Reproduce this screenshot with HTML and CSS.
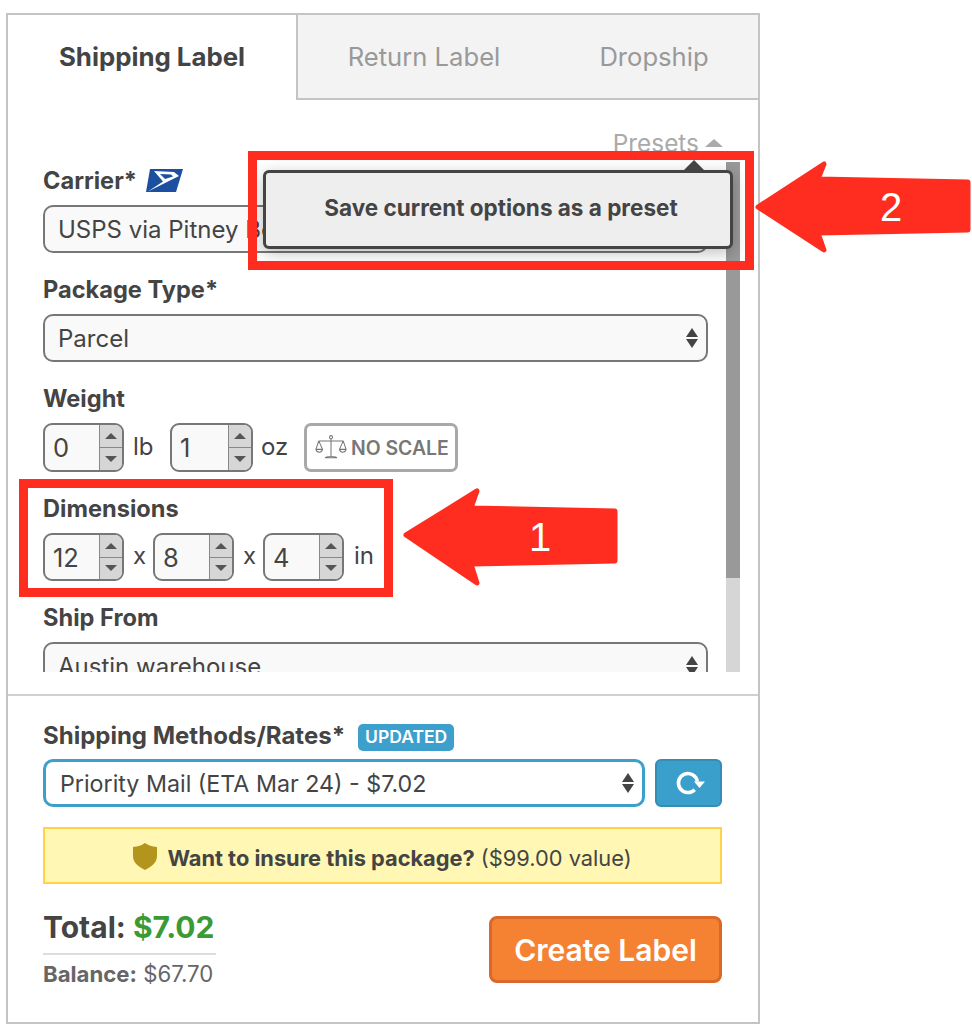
FILE: index.html
```html
<!DOCTYPE html>
<html>
<head>
  <meta charset="UTF-8">
  <title>Shipping Label</title>
  <link rel="stylesheet" href="styles.css">
</head>
<body>

<div class="panel">
  <!-- Tabs -->
  <div class="tabs">
    <div class="tab tab-active">Shipping Label</div>
    <div class="tab tab-return">Return Label</div>
    <div class="tab tab-drop">Dropship</div>
  </div>

  <!-- Scrolling form -->
  <div class="form-area">
    <div class="presets">Presets <span class="caret-up"></span></div>
    <div class="form-row">
      <div class="form-fields">
        <div class="field">
          <div class="label">Carrier*
            <svg class="usps" width="38" height="24" viewBox="0 0 38 24">
              <path d="M4 0H37L30 23H0Z" fill="#1c4fa0"/>
              <path d="M8 2L28 3L33 7L2 22.500L17 12.500Z" fill="#fff"/>
              <path d="M14 5L25 5.500L27 7.500L19 10Z" fill="#1c4fa0"/>
            </svg>
          </div>
          <div class="select">USPS via Pitney Bowes<span class="updown"></span></div>
        </div>
        <div class="field">
          <div class="label">Package Type*</div>
          <div class="select">Parcel<span class="updown"></span></div>
        </div>
        <div class="field">
          <div class="label">Weight</div>
          <div class="inline inline-tall">
            <div class="num"><span class="num-val">0</span><span class="spin"><i class="up"></i><i class="down"></i></span></div>
            <span class="unit unit-lb">lb</span>
            <div class="num num-wide"><span class="num-val">1</span><span class="spin"><i class="up"></i><i class="down"></i></span></div>
            <span class="unit unit-oz">oz</span>
            <div class="no-scale">
              <svg width="32" height="27" viewBox="0 0 34 28" fill="none" stroke="#777" stroke-width="1.1">
                <circle cx="17" cy="3" r="1.6"/>
                <path d="M17 5V24M4 7H30M4 7L1 16M4 7L8 16M30 7L26 16M30 7L33 16M1 16H8C7 20 2 20 1 16ZM26 16H33C32 20 27 20 26 16ZM11 25C11 23 23 23 23 25Z"/>
              </svg>
              NO SCALE
            </div>
          </div>
        </div>
        <div class="field">
          <div class="label">Dimensions</div>
          <div class="inline">
            <div class="num"><span class="num-val">12</span><span class="spin"><i class="up"></i><i class="down"></i></span></div>
            <span class="unit unit-x">x</span>
            <div class="num"><span class="num-val">8</span><span class="spin"><i class="up"></i><i class="down"></i></span></div>
            <span class="unit unit-x">x</span>
            <div class="num"><span class="num-val">4</span><span class="spin"><i class="up"></i><i class="down"></i></span></div>
            <span class="unit unit-in">in</span>
          </div>
        </div>
        <div class="field">
          <div class="label">Ship From</div>
          <div class="select">Austin warehouse<span class="updown"></span></div>
        </div>
      </div>
      <div class="scrollbar"><div class="scrollbar-thumb"></div></div>
    </div>
  </div>

  <!-- Rates and totals -->
  <div class="footer">
    <div class="label rates-label">Shipping Methods/Rates* <span class="badge">UPDATED</span></div>
    <div class="rates-row">
      <div class="select select-rate">Priority Mail (ETA Mar 24) - $7.02<span class="updown"></span></div>
      <div class="refresh">
        <svg width="32" height="30" viewBox="0 0 32 30" fill="none">
          <path d="M24.300 13.500A9.500 9.500 0 1 0 21.700 21.700" stroke="#fff" stroke-width="3.600"/>
          <path d="M21 13.500H32L26.500 20Z" fill="#fff"/>
        </svg>
      </div>
    </div>
    <div class="insure">
      <svg width="24" height="27" viewBox="0 0 24 27"><path d="M12 0C15 2.500 19 3.500 24 4V13C24 20 18 24 12 27C6 24 0 20 0 13V4C5 3.500 9 2.500 12 0Z" fill="#b3941c"/></svg>
      <span><b>Want to insure this package?</b> ($99.00 value)</span>
    </div>
    <div class="total-row">
      <div class="totals">
        <div class="total">Total: <span class="total-price">$7.02</span></div>
        <div class="balance"><b>Balance:</b> $67.70</div>
      </div>
      <div class="create-btn">Create Label</div>
    </div>
  </div>
</div>

<!-- Preset popover -->
<div class="popover">
  Save current options as a preset
  <span class="popover-caret"></span>
</div>

<!-- Red annotations -->
<div class="mark mark-one"></div>
<div class="mark mark-two"></div>
<div class="arrow arrow-one">
  <svg width="218" height="100" viewBox="0 0 218 100">
    <path d="M5 48L76 4L70 21L214 24V74L70 77L76 96Z" fill="#ff2d20" stroke="#ff2d20" stroke-width="5" stroke-linejoin="round"/>
  </svg>
  <span class="arrow-num">1</span>
</div>
<div class="arrow arrow-two">
  <svg width="218" height="94" viewBox="0 0 218 94">
    <path d="M4 47L70 4L64 19L214 22V70L64 73L70 90Z" fill="#ff2d20" stroke="#ff2d20" stroke-width="5" stroke-linejoin="round"/>
  </svg>
  <span class="arrow-num">2</span>
</div>

</body>
</html>
```

FILE: styles.css
```css
* {
  box-sizing: border-box;
}

body {
  margin: 0;
  padding: 13px 0 0 6px;
  font-family: Inter, "Liberation Sans", sans-serif;
  color: #444;
  background: #fff;
}

.panel {
  width: 754px;
  height: 1011px;
  border: 2px solid #c4c4c4;
}

/* Tabs */
.tabs {
  display: flex;
  height: 85px;
}

.tab {
  display: flex;
  align-items: center;
  justify-content: center;
  font-size: 25.6px;
  background: #f3f3f3;
  color: #999;
  border-bottom: 2px solid #c4c4c4;
}

.tab-active {
  width: 288px;
  padding-bottom: 3px;
  background: #fff;
  color: #444;
  font-size: 25.800px;
  font-weight: 700;
  border-bottom: none;
}

.tab-return {
  width: 254px;
  border-left: 2px solid #c4c4c4;
}

.tab-drop {
  flex: 1;
}

/* Form */
.form-area {
  height: 572px;
  padding-left: 35px;
  overflow: hidden;
}

.presets {
  height: 30px;
  margin-top: 28px;
  padding-right: 35px;
  display: flex;
  align-items: center;
  justify-content: flex-end;
  gap: 6px;
  font-size: 24.400px;
  color: #aaa;
}

.caret-up {
  width: 0;
  height: 0;
  border-left: 9px solid transparent;
  border-right: 9px solid transparent;
  border-bottom: 8px solid #aaa;
}

.form-row {
  display: flex;
  gap: 18px;
  height: 514px;
}

.form-fields {
  width: 665px;
  padding-top: 8px;
}

.field {
  margin-bottom: 22px;
}

.label {
  height: 30px;
  margin-bottom: 9px;
  display: flex;
  align-items: center;
  gap: 9px;
  font-size: 23.600px;
  font-weight: 700;
  line-height: 30px;
}

.select {
  position: relative;
  height: 48px;
  padding-left: 13px;
  display: flex;
  align-items: center;
  border: 2px solid #777;
  border-radius: 10px;
  background: #f9f9f9;
  font-size: 24px;
  font-weight: 400;
  white-space: nowrap;
}

/* Up and down select arrows */
.updown {
  position: absolute;
  right: 8px;
  top: 50%;
  width: 12px;
  height: 20px;
  margin-top: -10px;
}

.updown::before,
.updown::after {
  content: "";
  position: absolute;
  left: 0;
  border-left: 6px solid transparent;
  border-right: 6px solid transparent;
}

.updown::before {
  top: 0;
  border-bottom: 9px solid #444;
}

.updown::after {
  bottom: 0;
  border-top: 9px solid #444;
}

.inline {
  display: flex;
  align-items: center;
  height: 48px;
}

.inline-tall {
  height: 49px;
}

.num {
  display: flex;
  width: 81px;
  height: 100%;
  border: 2px solid #777;
  border-radius: 9px;
  overflow: hidden;
  background: #f9f9f9;
}

.num-wide {
  width: 83px;
}

.num-val {
  flex: 1;
  padding-left: 8px;
  display: flex;
  align-items: center;
  font-size: 25.500px;
}

.spin {
  width: 23px;
  display: flex;
  flex-direction: column;
  border-left: 1px solid #888;
  background: #d6d6d6;
}

.spin i {
  flex: 1;
  display: flex;
  align-items: center;
  justify-content: center;
}

.spin i::after {
  content: "";
  border-left: 6px solid transparent;
  border-right: 6px solid transparent;
}

.spin .up {
  border-bottom: 1px solid #888;
}

.spin .up::after {
  border-bottom: 6px solid #555;
}

.spin .down::after {
  border-top: 6px solid #555;
}

.unit {
  font-size: 24px;
  padding-bottom: 3px;
}

.unit-lb {
  width: 46px;
  padding-left: 9px;
}

.unit-oz {
  width: 51px;
  padding-left: 8px;
}

.unit-x {
  width: 29px;
  padding-left: 9px;
}

.unit-in {
  padding-left: 10px;
}

.no-scale {
  width: 154px;
  height: 49px;
  display: flex;
  align-items: center;
  gap: 4px;
  padding-left: 8px;
  border: 3px solid #a8a8a8;
  border-radius: 7px;
  font-size: 19.400px;
  font-weight: 600;
  color: #777;
  white-space: nowrap;
}

.scrollbar {
  width: 14px;
  margin-top: 4px;
  background: #d6d6d6;
}

.scrollbar-thumb {
  height: 416px;
  background: #999;
}

/* Footer */
.footer {
  border-top: 2px solid #d0d0d0;
  margin-top: 22px;
  padding: 25px 35px 0;
}

.rates-label {
  margin-bottom: 8px;
  gap: 4px;
  font-size: 24px;
  white-space: nowrap;
}

.badge {
  margin-left: 9px;
  padding: 0 7px;
  height: 27px;
  margin-top: 2px;
  display: flex;
  align-items: center;
  border-radius: 5px;
  background: #3d9fcc;
  color: #fff;
  font-size: 17.500px;
  font-weight: 600;
}

.rates-row {
  display: flex;
  gap: 10px;
}

.select-rate {
  width: 602px;
  padding-left: 14px;
  border: 3px solid #3d9fcc;
  background: #fff;
  font-size: 23.250px;
}

.refresh {
  width: 67px;
  height: 48px;
  display: flex;
  align-items: center;
  justify-content: center;
  background: #3a9fcb;
  border: 2px solid #358db5;
  border-radius: 6px;
}

.insure {
  margin-top: 20px;
  width: 679px;
  height: 57px;
  padding-top: 5px;
  display: flex;
  align-items: center;
  justify-content: center;
  gap: 10px;
  background: #fff7b3;
  border: 2px solid #ffd24a;
  font-size: 21.800px;
}

.insure svg {
  margin-top: -4px;
}

.insure b {
  font-weight: 700;
}

.total-row {
  display: flex;
  justify-content: space-between;
  align-items: flex-start;
  width: 679px;
  margin-top: 24px;
}

.totals {
  width: 173px;
}

.total {
  height: 47px;
  font-size: 30px;
  font-weight: 700;
  line-height: 38px;
  border-bottom: 2px solid #ddd;
  white-space: nowrap;
}

.total-price {
  color: #3a9a35;
}

.balance {
  margin-top: 4px;
  font-size: 22.200px;
  line-height: 30px;
  color: #666;
  white-space: nowrap;
}

.balance b {
  font-weight: 700;
}

.create-btn {
  margin-top: 8px;
  width: 233px;
  height: 67px;
  display: flex;
  align-items: center;
  justify-content: center;
  background: #f58233;
  border: 3px solid #d9682a;
  border-radius: 8px;
  color: #fff;
  font-size: 30px;
  font-weight: 600;
}

/* Overlays */
.popover {
  position: absolute;
  left: 263px;
  top: 170px;
  width: 470px;
  height: 79px;
  padding: 0 0 4px 6px;
  display: flex;
  align-items: center;
  justify-content: center;
  background: #eee;
  border: 3px solid #444;
  border-radius: 6px;
  box-shadow: 0 4px 16px rgba(0, 0, 0, 0.25);
  font-size: 22.500px;
  font-weight: 700;
}

.popover-caret {
  position: absolute;
  right: 26px;
  top: -13px;
  border-left: 10px solid transparent;
  border-right: 10px solid transparent;
  border-bottom: 10px solid #444;
}

.mark {
  position: absolute;
  border: 9px solid #ff2d20;
}

.mark-one {
  left: 19px;
  top: 479px;
  width: 374px;
  height: 118px;
}

.mark-two {
  left: 248px;
  top: 151px;
  width: 506px;
  height: 119px;
}

.arrow {
  position: absolute;
}

.arrow svg {
  display: block;
}

.arrow-num {
  position: absolute;
  color: #fff;
  font-family: "Liberation Sans", sans-serif;
  font-size: 40px;
  line-height: 46px;
}

.arrow-one {
  left: 401px;
  top: 487px;
}

.arrow-one .arrow-num {
  left: 128px;
  top: 27px;
}

.arrow-two {
  left: 754px;
  top: 160px;
}

.arrow-two .arrow-num {
  left: 126px;
  top: 24px;
}
```
